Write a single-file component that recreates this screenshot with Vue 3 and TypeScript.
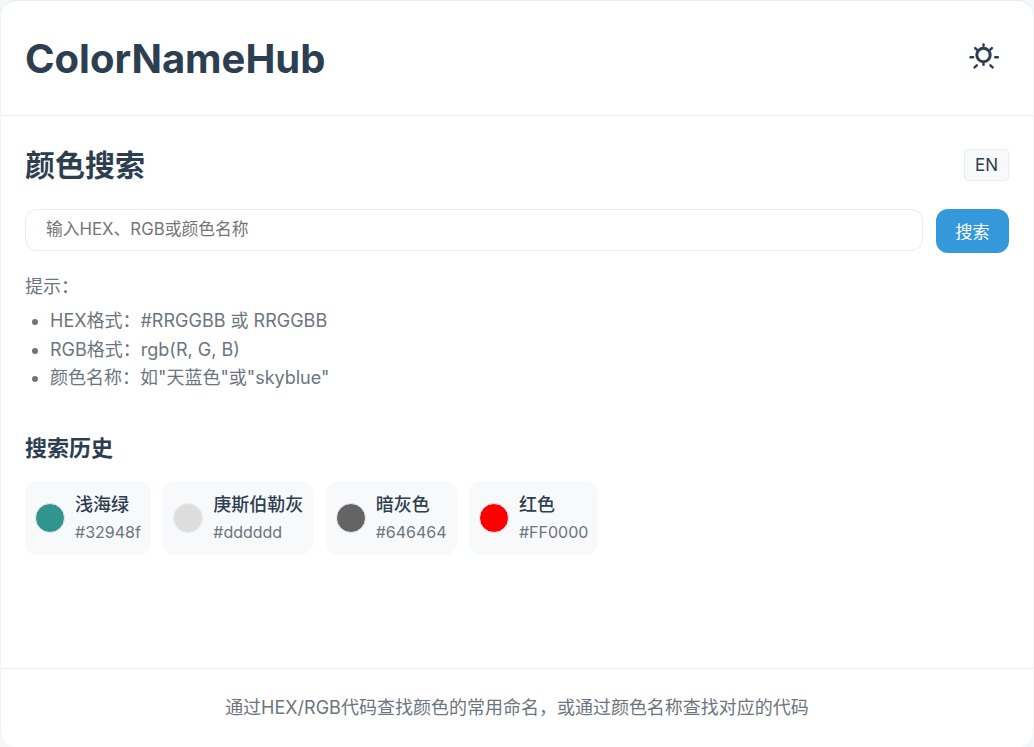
<script setup lang="ts">
interface Item { name: string; hex: string; color: string }
const history: Item[] = [
  { name: '浅海绿', hex: '#32948f', color: '#32948f' },
  { name: '庚斯伯勒灰', hex: '#dddddd', color: '#dddddd' },
  { name: '暗灰色', hex: '#646464', color: '#646464' },
  { name: '红色', hex: '#FF0000', color: '#FF0000' },
]
</script>

<template>
  <div class="app">
    <header class="header">
      <h1 class="logo">ColorNameHub</h1>
      <button class="theme" aria-label="theme">
        <svg width="32" height="32" viewBox="0 0 32 32" fill="none" stroke="#2c3e50" stroke-width="2.5" stroke-linecap="round">
          <circle cx="14.5" cy="13" r="6.7" stroke-width="3" />
          <path d="M14.5 2.6v1.2M1.5 15.3h2.6M26.2 15.3h2.6M5.6 25.4l2.2-2M23.6 25.4l-2.2-2M6.2 6.2l1.6 1.5M22.9 6.2l-1.6 1.5M14.5 21.8v1" />
        </svg>
      </button>
    </header>
    <main class="main">
      <div class="title-row">
        <h2 class="title">颜色搜索</h2>
        <button class="lang">EN</button>
      </div>
      <div class="search">
        <input class="input" placeholder="输入HEX、RGB或颜色名称" />
        <button class="go">搜索</button>
      </div>
      <div class="hints">
        <p class="hint-head">提示：</p>
        <ul class="hint-list">
          <li>HEX格式：#RRGGBB 或 RRGGBB</li>
          <li>RGB格式：rgb(R, G, B)</li>
          <li>颜色名称：如"天蓝色"或"skyblue"</li>
        </ul>
      </div>
      <h3 class="sub">搜索历史</h3>
      <div class="items">
        <div v-for="h in history" :key="h.hex" class="item">
          <span class="dot" :style="{ background: h.color }"></span>
          <div class="info">
            <span class="name">{{ h.name }}</span>
            <span class="hex">{{ h.hex }}</span>
          </div>
        </div>
      </div>
    </main>
    <footer class="footer">通过HEX/RGB代码查找颜色的常用命名，或通过颜色名称查找对应的代码</footer>
  </div>
</template>

<style>
html, body { margin: 0; background: #f5f7fa; }
</style>

<style scoped>
* { box-sizing: border-box; }
.app {
  height: 747px;
  display: flex;
  flex-direction: column;
  background: #fff;
  border: 1px solid #f2f3f5;
  border-top-color: #e8e9eb;
  border-bottom: 0;
  border-radius: 16px;
  font-family: Inter, "Noto Sans CJK SC", sans-serif;
  color: #2c3e50;
}
.header {
  height: 115px;
  flex: none;
  display: flex;
  align-items: center;
  justify-content: space-between;
  padding: 0 24px;
  border-bottom: 1px solid #eaecef;
}
.logo { margin: 0; font-size: 40px; font-weight: 700; }
.theme {
  width: 48px; height: 48px;
  display: flex; align-items: center; justify-content: center;
  background: none; border: 0; padding: 0;
}
.main { flex: 1; padding: 24px 24px 0; }
.title-row { display: flex; align-items: center; justify-content: space-between; height: 50px; }
.title { margin: 0 0 4px; font-size: 30px; font-weight: 700; }
.lang {
  width: 45px; height: 32px;
  background: #f8f9fa;
  border: 1px solid #eaecef;
  border-radius: 4px;
  font: inherit; font-size: 17px; color: #2c3e50; padding: 0;
}
.search { display: flex; gap: 13px; margin-top: 19px; align-items: flex-start; }
.input {
  flex: 1; height: 42px;
  border: 1px solid #eaecef;
  border-radius: 12px;
  padding: 0 20px 2px;
  font: inherit; font-size: 16.8px; outline: none;
}
.input::placeholder { color: #757575; }
.go {
  width: 73px; height: 44px;
  background: #3498db; color: #fff;
  border: 0; border-radius: 12px;
  padding: 0 0 2px;
  font: inherit; font-size: 17px;
}
.hints { margin-top: 20px; color: #6c757d; font-size: 18px; line-height: 28.8px; }
.hint-head { margin: 0; }
.hint-list { margin: 5px 0 0; padding: 0 0 0 25px; }
.sub { margin: 40px 0 0; font-size: 22px; font-weight: 700; line-height: 30px; }
.items { display: flex; gap: 12.4px; margin-top: 18px; }
.item {
  display: flex; align-items: center; gap: 10px;
  background: #f8f9fa; border-radius: 12px;
  padding: 9.6px 10px;
}
.dot { width: 30px; height: 30px; border-radius: 50%; border: 1px solid #eaecef; flex: none; }
.info { display: flex; flex-direction: column; }
.name { font-size: 18px; font-weight: 500; line-height: 28.8px; }
.hex { font-size: 16px; color: #6c757d; line-height: 25.6px; }
.footer {
  height: 79px; flex: none;
  border-top: 1px solid #eaecef;
  padding-top: 25px;
  text-align: center;
  color: #6c757d; font-size: 18px; line-height: 28.8px;
}
</style>
